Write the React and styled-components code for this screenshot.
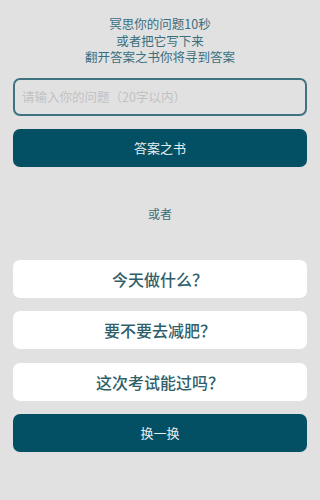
import React, { useState } from "react";
import styled, { createGlobalStyle } from "styled-components";

const GlobalStyle = createGlobalStyle`
  html, body {
    margin: 0;
    padding: 0;
    background: #e1e1e1;
    font-family: "Noto Sans CJK SC", "Noto Sans", sans-serif;
  }
`;

const Page = styled.div`
  display: flex;
  flex-direction: column;
  padding: 16px 13px 0;
  min-height: 500px;
  box-sizing: border-box;
`;

const Intro = styled.div`
  display: flex;
  flex-direction: column;
  align-items: center;
  gap: 1px;
  color: #3a6f7e;
`;

const IntroLine = styled.div`
  font-size: 12.5px;
  line-height: 15.5px;
`;

const Input = styled.input`
  margin-top: 13px;
  height: 38px;
  box-sizing: border-box;
  border: 2px solid #3f7382;
  border-radius: 7px;
  background: transparent;
  padding: 0 7px;
  font-family: inherit;
  font-size: 12.5px;
  color: #333;
  outline: none;

  &::placeholder {
    color: #c2c2c2;
  }
`;

const DarkButton = styled.button`
  margin-top: ${(p) => p.$top}px;
  height: 38px;
  border: none;
  border-radius: 7px;
  background: #034f63;
  color: #e8eef0;
  font-family: inherit;
  font-size: 13px;
`;

const Or = styled.div`
  margin-top: 39px;
  text-align: center;
  font-size: 12px;
  line-height: 16px;
  color: #3a6f7e;
`;

const Suggestions = styled.div`
  margin-top: 38px;
  display: flex;
  flex-direction: column;
  gap: 13.5px;
`;

const Card = styled.div`
  height: 38px;
  border-radius: 7px;
  background: #ffffff;
  display: flex;
  align-items: center;
  justify-content: center;
  font-size: 16px;
  font-weight: 500;
  color: #2f5f6b;
`;

const lists = [
  ["今天做什么？", "要不要去减肥？", "这次考试能过吗？"],
  ["明天会下雨吗？", "他喜欢我吗？", "要不要换工作？"],
];

export default function App() {
  const [idx, setIdx] = useState(0);
  return (
    <>
      <GlobalStyle />
      <Page>
        <Intro>
          <IntroLine>冥思你的问题10秒</IntroLine>
          <IntroLine>或者把它写下来</IntroLine>
          <IntroLine>翻开答案之书你将寻到答案</IntroLine>
        </Intro>
        <Input placeholder="请输入你的问题（20字以内）" />
        <DarkButton $top={13}>答案之书</DarkButton>
        <Or>或者</Or>
        <Suggestions>
          {lists[idx].map((q) => (
            <Card key={q}>{q}</Card>
          ))}
        </Suggestions>
        <DarkButton $top={13} onClick={() => setIdx((idx + 1) % lists.length)}>
          换一换
        </DarkButton>
      </Page>
    </>
  );
}
